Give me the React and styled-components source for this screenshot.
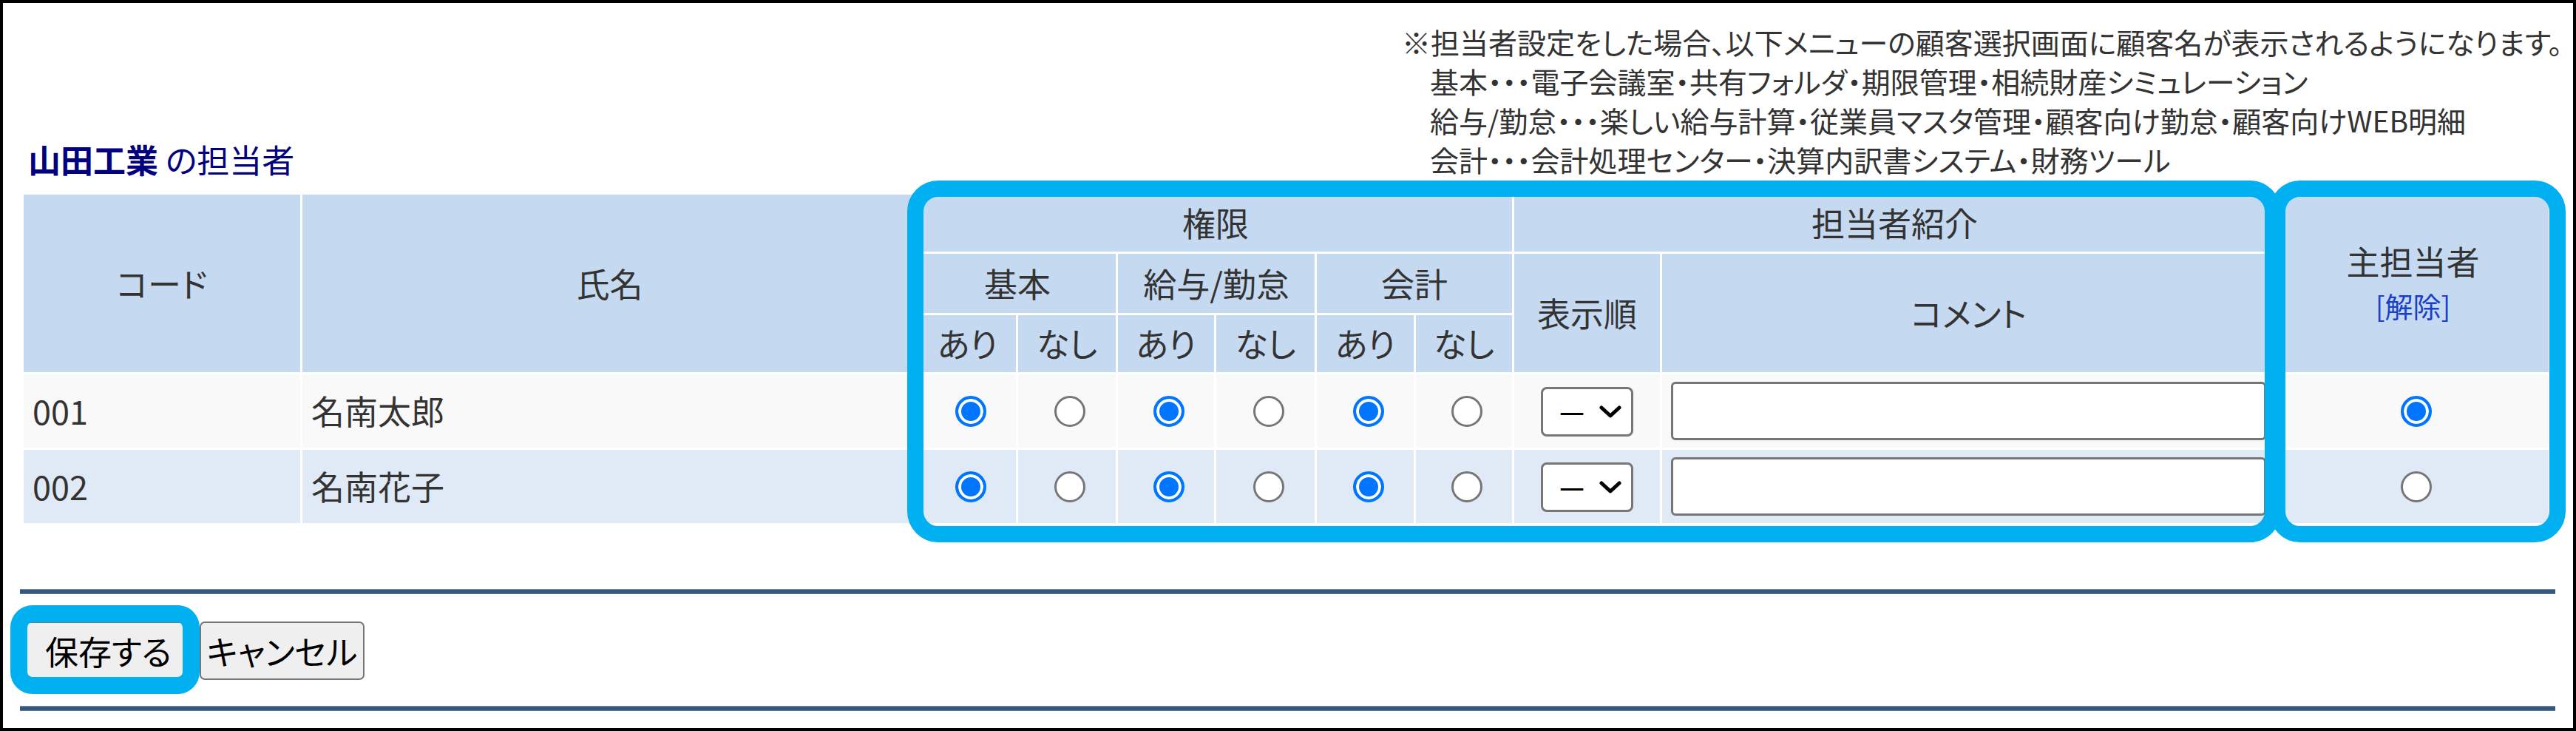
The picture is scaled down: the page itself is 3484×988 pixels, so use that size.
import React from "react";
import styled, { createGlobalStyle } from "styled-components";

const GlobalStyle = createGlobalStyle`
  html, body {
    margin: 0;
    padding: 0;
    background: #fff;
  }
  body {
    font-family: "Noto Sans CJK JP", "Noto Sans", sans-serif;
    font-feature-settings: "palt";
    color: #333;
  }
`;

const HIGHLIGHT = "#00b0f0";

const staff = [
  { code: "001", name: "名南太郎", main: true },
  { code: "002", name: "名南花子", main: false },
];

const columns = [377, 834, 134, 135, 133, 136, 134, 133, 200, 832, 370];

export default function App() {
  return (
    <>
      <GlobalStyle />
      <Frame>
        <TopBar>
          <Title>
            <b>山田工業</b> の担当者
          </Title>
          <Note>
            <NoteLine>※担当者設定をした場合、以下メニューの顧客選択画面に顧客名が表示されるようになります。</NoteLine>
            <NoteLine $indent>基本・・・電子会議室・共有フォルダ・期限管理・相続財産シミュレーション</NoteLine>
            <NoteLine $indent>給与/勤怠・・・楽しい給与計算・従業員マスタ管理・顧客向け勤怠・顧客向けWEB明細</NoteLine>
            <NoteLine $indent>会計・・・会計処理センター・決算内訳書システム・財務ツール</NoteLine>
          </Note>
        </TopBar>

        <Table>
          <colgroup>
            {columns.map((w, i) => (
              <Col key={i} $w={w} />
            ))}
          </colgroup>
          <thead>
            <tr>
              <Th rowSpan={3}>コード</Th>
              <Th rowSpan={3}>氏名</Th>
              <Th colSpan={6} $h={77}>権限</Th>
              <Th colSpan={2}>担当者紹介</Th>
              <Th rowSpan={3}>
                <MainHead>主担当者</MainHead>
                <ClearLink href="#">[解除]</ClearLink>
              </Th>
            </tr>
            <tr>
              <Th colSpan={2} $h={80}>基本</Th>
              <Th colSpan={2}>給与/勤怠</Th>
              <Th colSpan={2}>会計</Th>
              <Th rowSpan={2}>表示順</Th>
              <Th rowSpan={2}>コメント</Th>
            </tr>
            <tr>
              {["あり", "なし", "あり", "なし", "あり", "なし"].map((t, i) => (
                <Th key={i} $h={77}>{t}</Th>
              ))}
            </tr>
          </thead>
          <tbody>
            {staff.map((s, r) => (
              <tr key={s.code}>
                <Td $alt={r % 2 === 1} $align="left" $pl={12}>{s.code}</Td>
                <Td $alt={r % 2 === 1} $align="left" $pl={12}>{s.name}</Td>
                {["kihon", "kyuyo", "kaikei"].map((g) => (
                  <React.Fragment key={g}>
                    <Td $alt={r % 2 === 1} $pl={8}>
                      <Radio name={`${g}-${s.code}`} defaultChecked />
                    </Td>
                    <Td $alt={r % 2 === 1} $pl={8}>
                      <Radio name={`${g}-${s.code}`} />
                    </Td>
                  </React.Fragment>
                ))}
                <Td $alt={r % 2 === 1}>
                  <SelectWrap>
                    <Select defaultValue="">
                      <option value="">－</option>
                      <option value="1">1</option>
                      <option value="2">2</option>
                    </Select>
                    <Chevron width="30" height="18" viewBox="0 0 30 18">
                      <path d="M3 3 L15 14 L27 3" fill="none" stroke="#000" strokeWidth="5" strokeLinecap="round" strokeLinejoin="round" />
                    </Chevron>
                  </SelectWrap>
                </Td>
                <Td $alt={r % 2 === 1} $align="left" $pl={12}>
                  <TextInput />
                </Td>
                <Td $alt={r % 2 === 1} $pl={8}>
                  <Radio name="main" defaultChecked={s.main} />
                </Td>
              </tr>
            ))}
          </tbody>
        </Table>

        <Divider $mt={86} />
        <ButtonRow>
          <Button $w={235}>保存する</Button>
          <Button $w={223}>キャンセル</Button>
        </ButtonRow>
        <Divider $mt={35} />

        <Highlight $x={1223} $y={240} $w={1858} $h={489} $bw={22} $r={42} />
        <Highlight $x={3065} $y={240} $w={401} $h={489} $bw={22} $r={42} />
        <Highlight $x={10} $y={814} $w={256} $h={120} $bw={23} $r={30} />
      </Frame>
    </>
  );
}

const Frame = styled.div`
  position: relative;
  box-sizing: border-box;
  width: 3484px;
  height: 988px;
  border: 4px solid #000;
  padding: 26px 28px 0 25px;
  background: #fff;
  overflow: hidden;
`;

const TopBar = styled.div`
  display: flex;
  align-items: flex-end;
  justify-content: space-between;
`;

const Title = styled.h2`
  margin: 0 0 0 9px;
  font-size: 44px;
  line-height: 53px;
  font-weight: normal;
  color: #000080;
  b {
    font-weight: bold;
  }
`;

const Note = styled.div`
  width: 1556px;
  font-size: 39px;
  line-height: 53px;
  color: #333;
  white-space: nowrap;
`;

const NoteLine = styled.div`
  padding-left: ${(p) => (p.$indent ? "38px" : "0")};
`;

const Table = styled.table`
  margin-top: 18px;
  width: 3418px;
  table-layout: fixed;
  border-collapse: collapse;
  font-size: 45px;
  line-height: 1.3;
  color: #333;
`;

const Col = styled.col`
  width: ${(p) => p.$w}px;
`;

const Th = styled.th`
  height: ${(p) => (p.$h ? `${p.$h}px` : "auto")};
  padding: 0;
  background: #c5d9f0;
  border: 3px solid #fff;
  font-weight: normal;
  text-align: center;
  vertical-align: middle;
`;

const MainHead = styled.div`
  line-height: 60px;
`;

const ClearLink = styled.a`
  display: block;
  font-size: 38px;
  line-height: 60px;
  color: #1a3fc8;
  text-decoration: none;
`;

const Td = styled.td`
  height: 99px;
  padding: 0 0 0 ${(p) => p.$pl || 0}px;
  background: ${(p) => (p.$alt ? "#dfeaf6" : "#f9f9f9")};
  border: 3px solid #fff;
  text-align: ${(p) => p.$align || "center"};
  vertical-align: middle;
`;

const Radio = styled.input.attrs({ type: "radio" })`
  appearance: none;
  display: block;
  box-sizing: border-box;
  width: 42px;
  height: 42px;
  margin: 0 auto;
  border: 3px solid #767676;
  border-radius: 50%;
  background: #fff;
  &:checked {
    border: 4px solid #0075ff;
    background: #0075ff;
    box-shadow: inset 0 0 0 4px #fff;
  }
`;

const SelectWrap = styled.span`
  position: relative;
  display: inline-block;
  vertical-align: middle;
`;

const Select = styled.select`
  appearance: none;
  display: block;
  box-sizing: border-box;
  width: 125px;
  height: 67px;
  padding: 0 0 0 18px;
  border: 3px solid #767676;
  border-radius: 8px;
  background: #fff;
  color: #000;
  font-family: inherit;
  font-size: 42px;
`;

const Chevron = styled.svg`
  position: absolute;
  right: 16px;
  top: 50%;
  margin-top: -9px;
  pointer-events: none;
`;

const TextInput = styled.input.attrs({ type: "text" })`
  display: block;
  box-sizing: border-box;
  width: 805px;
  height: 79px;
  border: 3px solid #767676;
  border-radius: 6px;
  background: #fff;
  font-family: inherit;
  font-size: 40px;
`;

const Divider = styled.div`
  height: 5px;
  margin: ${(p) => p.$mt}px -4px 0 -2px;
  background: #365780;
  border-top: 1px solid #7a8fa9;
  border-bottom: 1px solid #5f7896;
`;

const ButtonRow = styled.div`
  display: flex;
  gap: 6px;
  margin-top: 37px;
`;

const Button = styled.button`
  box-sizing: border-box;
  width: ${(p) => p.$w}px;
  height: 79px;
  padding: 0;
  border: 2px solid #767676;
  border-radius: 7px;
  background: #efefef;
  color: #000;
  font-family: inherit;
  font-feature-settings: "palt";
  font-size: 45px;
`;

const Highlight = styled.div`
  position: absolute;
  left: ${(p) => p.$x}px;
  top: ${(p) => p.$y}px;
  width: ${(p) => p.$w}px;
  height: ${(p) => p.$h}px;
  box-sizing: border-box;
  border: ${(p) => p.$bw}px solid ${HIGHLIGHT};
  border-radius: ${(p) => p.$r}px;
  pointer-events: none;
`;
